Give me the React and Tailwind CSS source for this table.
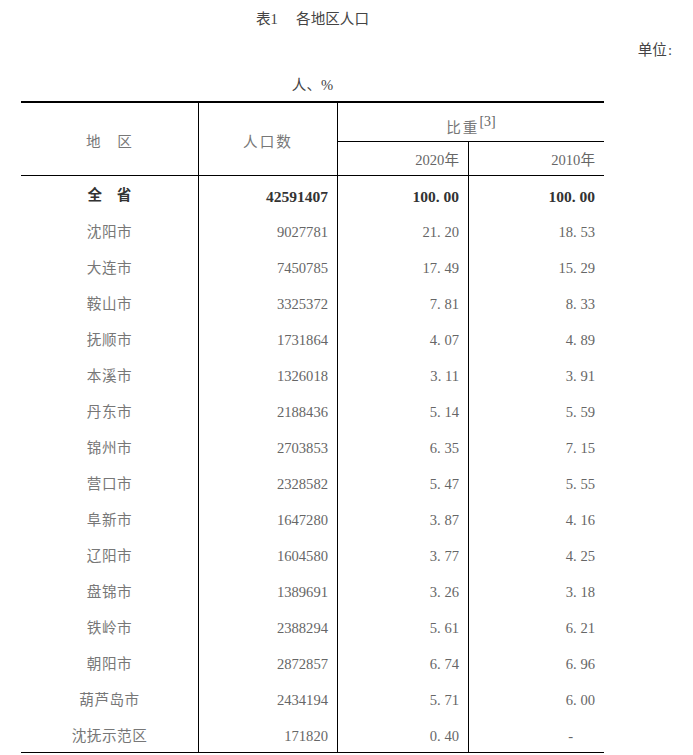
import React from "react";

const rows = [
  ["沈阳市", "9027781", "21.20", "18.53"],
  ["大连市", "7450785", "17.49", "15.29"],
  ["鞍山市", "3325372", "7.81", "8.33"],
  ["抚顺市", "1731864", "4.07", "4.89"],
  ["本溪市", "1326018", "3.11", "3.91"],
  ["丹东市", "2188436", "5.14", "5.59"],
  ["锦州市", "2703853", "6.35", "7.15"],
  ["营口市", "2328582", "5.47", "5.55"],
  ["阜新市", "1647280", "3.87", "4.16"],
  ["辽阳市", "1604580", "3.77", "4.25"],
  ["盘锦市", "1389691", "3.26", "3.18"],
  ["铁岭市", "2388294", "5.61", "6.21"],
  ["朝阳市", "2872857", "6.74", "6.96"],
  ["葫芦岛市", "2434194", "5.71", "6.00"],
  ["沈抚示范区", "171820", "0.40", "-"],
];

// period gets a full digit width, like the half-width dot in the original
function Num({ value }) {
  if (value === "-") return <span className="inline-block mr-[22px]">-</span>;
  const [a, b] = value.split(".");
  if (b === undefined) return <span>{a}</span>;
  return (
    <span>
      {a}
      <span className="inline-block w-[0.5em] text-left">.</span>
      {b}
    </span>
  );
}

const cols = "grid grid-cols-[177px_139px_131px_136px]";
const numCell = "flex items-center justify-end pr-[9px] pt-[5px] border-l border-black";

export default function App() {
  return (
    <div className="w-[693px] min-h-[755px] bg-white px-[21px] font-['Liberation_Serif','Noto_Sans_CJK_SC',serif] text-[14.6px] text-[#666]">
      <div className="w-[583px] h-[36px] leading-[38px] text-center text-[#444]">
        表1　 各地区人口
      </div>
      <div className="h-[28px] leading-[28px] text-right text-[#444]">
        单位<span className="ml-[1px]">:</span>
      </div>
      <div className="w-[583px] h-[37px] pt-[14px] leading-[14px] text-center text-[#444]">人、%</div>

      <div className="w-[583px] border-t-2 border-b border-black">
        {/* header */}
        <div className={`${cols} grid-rows-[39px_33px] border-b border-black`}>
          <div className="row-span-2 flex items-center justify-center pt-[8px] tracking-[1px] text-[#777]">地　区</div>
          <div className="row-span-2 flex items-center justify-center pt-[8px] border-l border-black tracking-[2px] text-[#777]">
            人口数
          </div>
          <div className="col-span-2 flex items-center justify-center pt-[13px] border-l border-b border-black">
            <span className="tracking-[2px] text-[#777]">比重</span>
            <sup className="text-[14px]">[3]</sup>
          </div>
          <div className="flex items-center justify-end pr-[9px] pt-[4px] border-l border-black">2020年</div>
          <div className="flex items-center justify-end pr-[9px] pt-[4px] border-l border-black">2010年</div>
        </div>

        {/* province total */}
        <div className={`${cols} h-[36px] font-bold text-[#333]`}>
          <div className="flex items-center justify-center pt-[4px]">全　省</div>
          <div className={`${numCell} text-[15.5px]`}>
            <Num value="42591407" />
          </div>
          <div className={`${numCell} text-[15.5px]`}>
            <Num value="100.00" />
          </div>
          <div className={`${numCell} text-[15.5px]`}>
            <Num value="100.00" />
          </div>
        </div>

        {rows.map((r) => (
          <div key={r[0]} className={`${cols} h-[36px]`}>
            <div className="flex items-center justify-center pt-[5px] tracking-[0.5px] text-[#777]">{r[0]}</div>
            <div className={numCell}>
              <Num value={r[1]} />
            </div>
            <div className={numCell}>
              <Num value={r[2]} />
            </div>
            <div className={numCell}>
              <Num value={r[3]} />
            </div>
          </div>
        ))}
      </div>
    </div>
  );
}
